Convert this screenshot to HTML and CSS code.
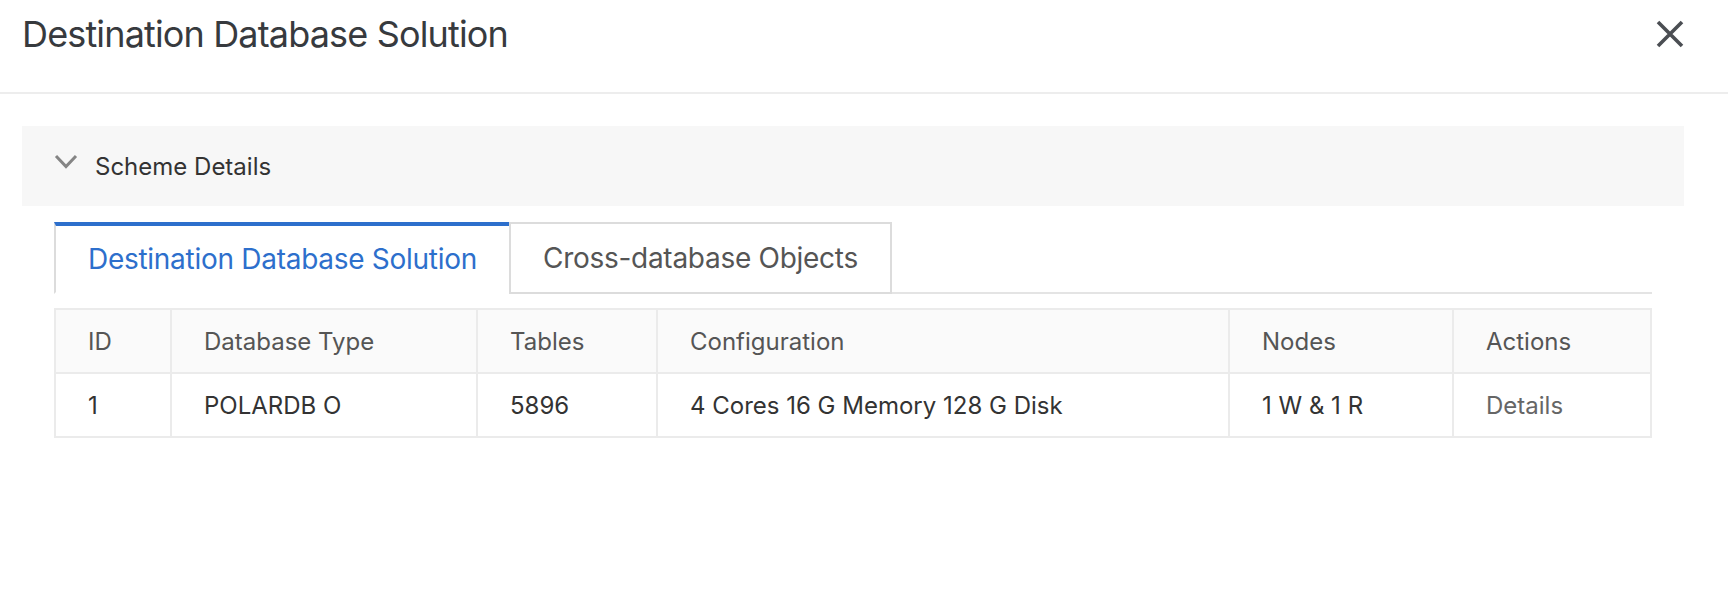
FILE: index.html
```html
<!DOCTYPE html>
<html lang="en">
<head>
<meta charset="utf-8">
<title>Destination Database Solution</title>
<link rel="stylesheet" href="styles.css">
</head>
<body>
<div class="dialog">
  <header class="dialog-header">
    <h1 class="dialog-title">Destination Database Solution</h1>
    <button class="close-btn" aria-label="Close">
      <svg width="28" height="28" viewBox="0 0 28 28"><path d="M2 2 L26 26 M26 2 L2 26" stroke="#4b4e53" stroke-width="3.6" stroke-linecap="butt" fill="none"/></svg>
    </button>
  </header>
  <main class="dialog-body">
    <section class="collapse">
      <div class="collapse-head">
        <svg class="chevron" width="24" height="15" viewBox="0 0 24 15"><polyline points="2,2 12,12.5 22,2" fill="none" stroke="#858585" stroke-width="3"/></svg>
        <span class="collapse-title">Scheme Details</span>
      </div>
    </section>
    <section class="content">
      <div class="tabs">
        <div class="tab active">Destination Database Solution</div>
        <div class="tab">Cross-database Objects</div>
      </div>
      <table class="grid">
        <colgroup>
          <col class="c-id"><col class="c-type"><col class="c-tables"><col class="c-config"><col class="c-nodes"><col class="c-actions">
        </colgroup>
        <thead>
          <tr><th>ID</th><th>Database Type</th><th>Tables</th><th>Configuration</th><th>Nodes</th><th>Actions</th></tr>
        </thead>
        <tbody>
          <tr><td>1</td><td>POLARDB O</td><td>5896</td><td>4 Cores 16 G Memory 128 G Disk</td><td>1 W &amp; 1 R</td><td class="action">Details</td></tr>
        </tbody>
      </table>
    </section>
  </main>
</div>
</body>
</html>
```

FILE: styles.css
```css
html, body {
  margin: 0;
  padding: 0;
  background: #ffffff;
}
body {
  width: 1728px;
  height: 604px;
  overflow: hidden;
  font-family: Inter, "Noto Sans", "Liberation Sans", sans-serif;
  color: #333333;
}
.dialog-header {
  height: 94px;
  box-sizing: border-box;
  padding: 0 44px 24px 22px;
  display: flex;
  align-items: center;
  justify-content: space-between;
  border-bottom: 2px solid #ededed;
}
.dialog-title {
  margin: 0;
  font-size: 36px;
  letter-spacing: -0.85px;
  font-weight: 400;
  color: #373a3e;
  line-height: 44px;
}
.close-btn {
  border: 0;
  padding: 0;
  background: none;
  width: 28px;
  height: 28px;
  display: flex;
}
.dialog-body {
  padding: 32px 44px 0 22px;
}
.collapse-head {
  height: 80px;
  background: #f7f7f7;
  display: flex;
  align-items: center;
  padding-left: 32px;
  gap: 17px;
}
.chevron {
  display: block;
  margin-top: -9px;
}
.collapse-title {
  font-size: 24px;
  color: #333333;
}
.content {
  padding: 16px 32px 0 32px;
}
.tabs {
  display: flex;
  height: 72px;
  box-sizing: border-box;
  border-bottom: 2px solid #e4e4e4;
}
.tab {
  height: 72px;
  box-sizing: border-box;
  padding: 0 32px 0 32px;
  display: flex;
  align-items: center;
  font-size: 28px;
  letter-spacing: -0.28px;
  color: #555555;
  border: 2px solid #dcdcdc;
  background: #ffffff;
}
.tab.active {
  color: #2d6fcc;
  border-top: 4px solid #2d6fcc;
  border-right: 0;
  border-bottom: 2px solid #ffffff;
  padding: 0 32px 0 32px;
}
.grid {
  margin-top: 14px;
  width: 1596px;
  border-collapse: collapse;
  table-layout: fixed;
  border: 2px solid #ebebeb;
  font-size: 24px;
}
.c-id { width: 116px; }
.c-type { width: 306px; }
.c-tables { width: 180px; }
.c-config { width: 572px; }
.c-nodes { width: 224px; }
.c-actions { width: 198px; }
.grid th, .grid td {
  border: 2px solid #ebebeb;
  height: 62px;
  padding: 0 0 0 32px;
  text-align: left;
  font-weight: 400;
  white-space: nowrap;
}
.grid th {
  background: #fafafa;
  color: #555555;
}
.grid td {
  color: #333333;
}
.grid td.action {
  color: #666666;
}
```
